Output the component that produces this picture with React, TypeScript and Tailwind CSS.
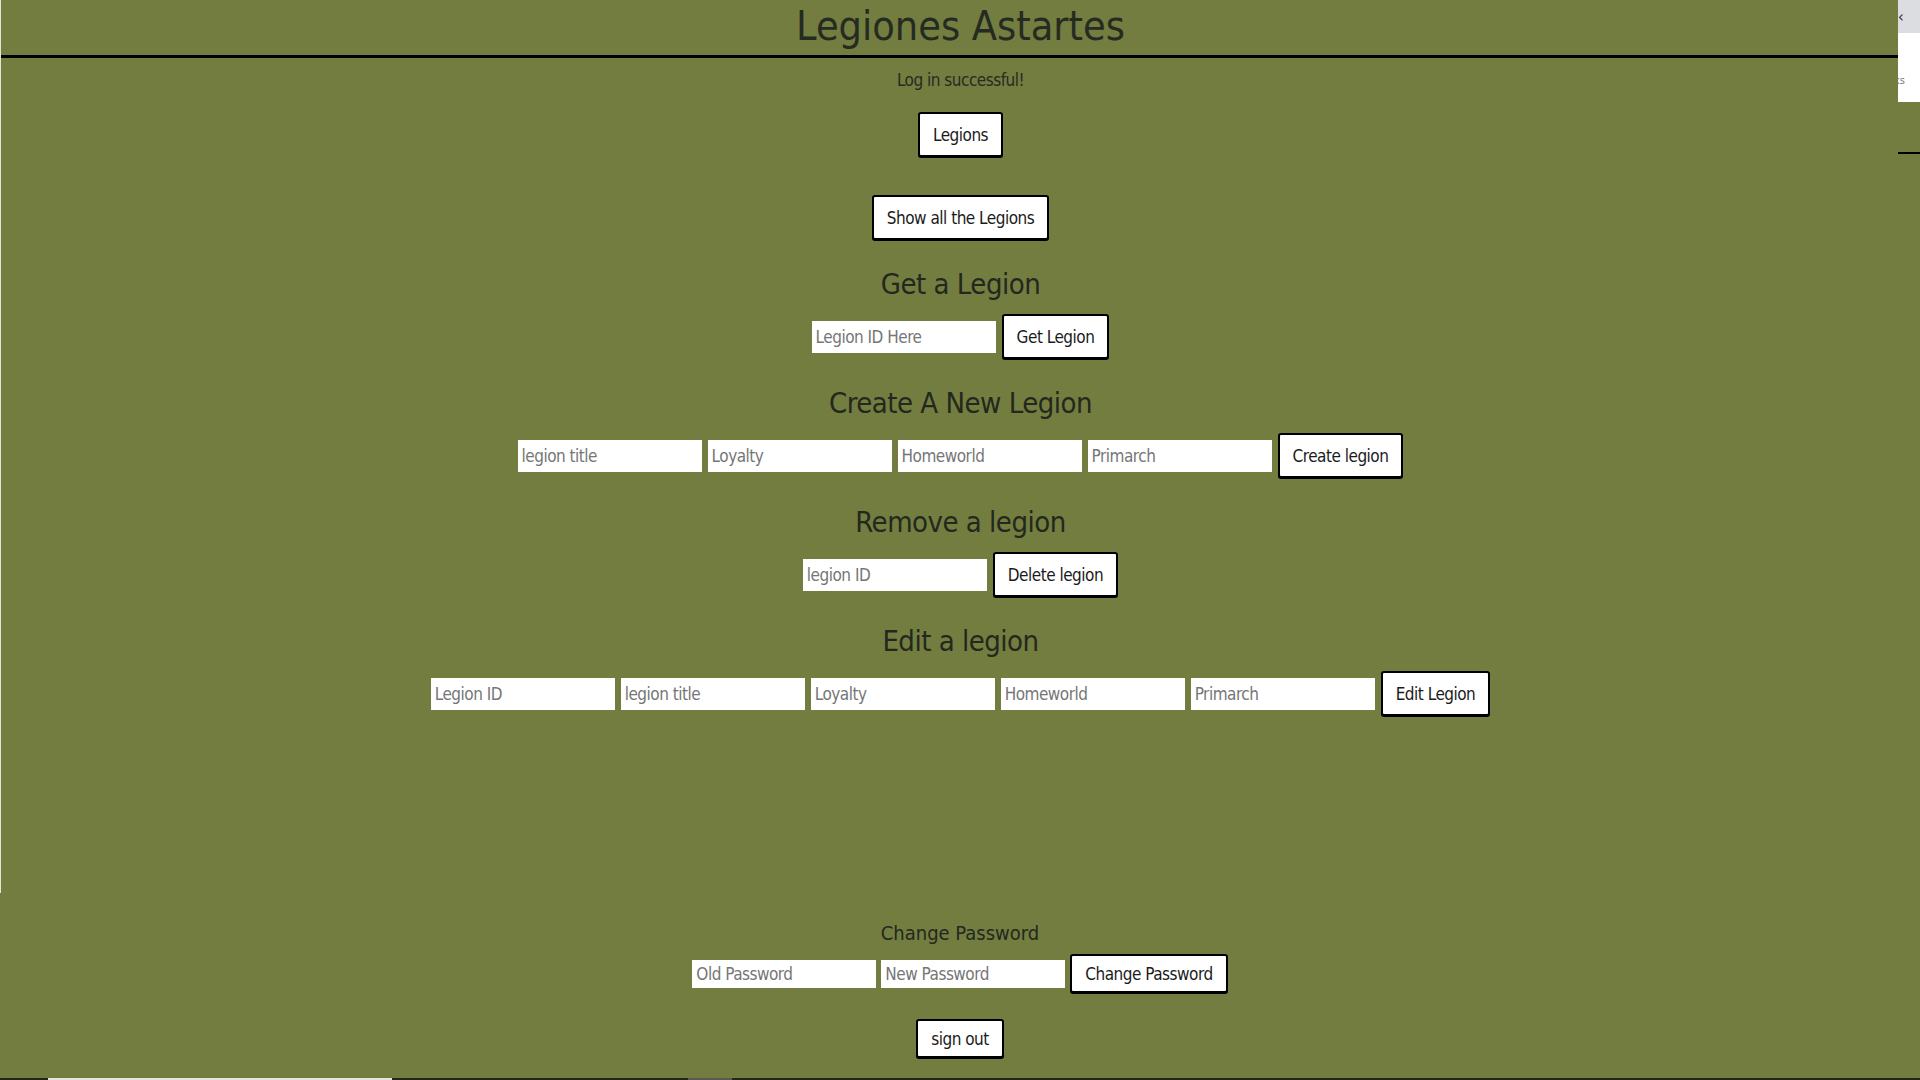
import { ReactNode } from "react";

const narrow = "[font-family:'DejaVu_Sans_Condensed','Liberation_Sans',sans-serif]";

function Btn({ children, small }: { children: ReactNode; small?: boolean }) {
    return (
        <button
            className={
                "bg-white border-2 border-black rounded-[3px] px-[13px] text-[17px] leading-[24px] tracking-[-0.5px] text-[#1b1b1b] flex items-center shadow-[0_1px_0_#000] " +
                (small ? "h-[39px]" : "h-[45px]")
            }
        >
            {children}
        </button>
    );
}

function Field({ placeholder, small }: { placeholder: string; small?: boolean }) {
    return (
        <input
            placeholder={placeholder}
            className={
                "bg-white w-[184px] pl-[4px] text-[17px] tracking-[-0.5px] text-[#222] outline-none placeholder:text-[#767676] " +
                (small ? "h-[28px]" : "h-[32px]")
            }
        />
    );
}

function Section({ title, fields, action }: { title: string; fields: string[]; action: string }) {
    return (
        <>
            <h2 className="mt-[24px] text-[29px] leading-[40px] tracking-[-0.5px] text-[#23281e]">{title}</h2>
            <div className="mt-[10px] flex items-center gap-[6px]">
                {fields.map((f) => (
                    <Field key={f} placeholder={f} />
                ))}
                <Btn>{action}</Btn>
            </div>
        </>
    );
}

export default function App() {
    return (
        <div className={"relative h-[1080px] overflow-hidden bg-[#737d40] flex flex-col " + narrow}>
            {/* main legion panel */}
            <section className="h-[893px] border-l border-white/80 flex flex-col items-center">
                <header className="w-full pt-[3px] pb-[5px] border-b-[3px] border-black text-center">
                    <h1 className="text-[41px] leading-[47px] text-[#262b22]">Legiones Astartes</h1>
                </header>
                <p className="mt-[10px] text-[17px] leading-[24px] tracking-[-0.5px] text-[#262b22]">Log in successful!</p>
                <div className="mt-[20px]">
                    <Btn>Legions</Btn>
                </div>
                <div className="mt-[38px]">
                    <Btn>Show all the Legions</Btn>
                </div>
                <Section title="Get a Legion" fields={["Legion ID Here"]} action="Get Legion" />
                <Section
                    title="Create A New Legion"
                    fields={["legion title", "Loyalty", "Homeworld", "Primarch"]}
                    action="Create legion"
                />
                <Section title="Remove a legion" fields={["legion ID"]} action="Delete legion" />
                <Section
                    title="Edit a legion"
                    fields={["Legion ID", "legion title", "Loyalty", "Homeworld", "Primarch"]}
                    action="Edit Legion"
                />
            </section>

            {/* account */}
            <section className="flex flex-col items-center">
                <h3 className="mt-[26px] text-[20px] leading-[28px] text-[#23281e]">Change Password</h3>
                <div className="mt-[7px] flex items-center gap-[5px]">
                    <Field placeholder="Old Password" small />
                    <Field placeholder="New Password" small />
                    <Btn small>Change Password</Btn>
                </div>
                <div className="mt-[26px]">
                    <Btn small>sign out</Btn>
                </div>
            </section>

            {/* scrollbar strip */}
            <div className="mt-auto h-[2px] flex bg-[#23261a]">
                <div className="w-[48px]" />
                <div className="w-[344px] bg-[#e4e4e4]" />
                <div className="w-[296px]" />
                <div className="w-[44px] bg-[#5a5a52]" />
            </div>

            {/* clipped side panel */}
            <div className="absolute top-0 right-0 w-[22px] flex flex-col overflow-hidden">
                <div className="h-[33px] bg-[#dcdde1] text-[16px] leading-[33px] text-[#333]">‹</div>
                <div className="h-[69px] bg-white relative">
                    <span className="absolute left-[-6px] top-[14px] text-[10px] leading-[10px] text-[#666]">:</span>
                    <span className="absolute left-[-4px] top-[40px] text-[11px] text-[#777]">ks</span>
                </div>
                <div className="h-[50px] bg-[#737d40]" />
                <div className="h-[2px] bg-black" />
            </div>
        </div>
    );
}
